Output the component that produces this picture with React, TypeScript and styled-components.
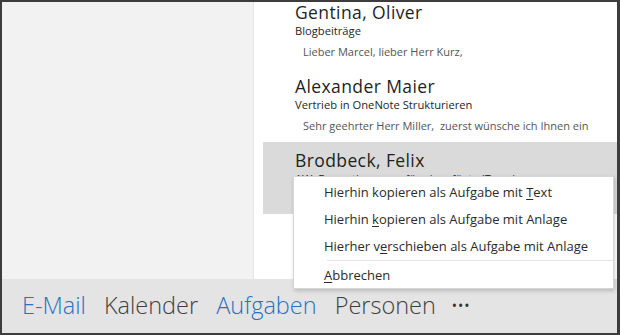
import React from "react";
import styled, { createGlobalStyle } from "styled-components";

const GlobalStyle = createGlobalStyle`
  html, body {
    margin: 0;
    padding: 0;
    background: #ffffff;
  }
  body {
    font-family: "Open Sans", "Noto Sans", sans-serif;
  }
`;

const Frame = styled.div`
  position: relative;
  box-sizing: border-box;
  width: 620px;
  height: 335px;
  border: 2px solid #3d3d3d;
  border-right-width: 3px;
  display: flex;
  flex-direction: column;
  overflow: hidden;
`;

const Main = styled.div`
  display: flex;
  height: 277px;
`;

const FolderPane = styled.div`
  width: 251px;
  background: #f2f2f2;
  border-right: 1px solid #e6e6e6;
`;

const MessageList = styled.div`
  flex: 1;
  background: #ffffff;
  overflow: hidden;
`;

const ListScroll = styled.div`
  margin-top: -8px;
  display: flex;
  flex-direction: column;
  gap: 2px;
`;

const Row = styled.div<{ $selected?: boolean }>`
  box-sizing: border-box;
  height: 72px;
  margin-left: 9px;
  padding: 8px 0 0 32px;
  background: ${(p) => (p.$selected ? "#dadada" : "transparent")};
  white-space: nowrap;
`;

const Sender = styled.div`
  font-size: 17.5px;
  line-height: 21px;
  letter-spacing: 0.4px;
  color: #1f1f1f;
`;

const Subject = styled.div`
  font-size: 11.2px;
  line-height: 16px;
  color: #262626;
`;

const Preview = styled.div`
  margin-top: 5px;
  padding-left: 8px;
  font-size: 11px;
  line-height: 16px;
  color: #555555;
`;

const NavBar = styled.div`
  flex: 1;
  display: flex;
  align-items: center;
  gap: 18px;
  padding: 0 0 2px 20px;
  background: #e4e4e4;
`;

const NavItem = styled.span<{ $active?: boolean }>`
  font-size: 23.5px;
  font-weight: 300;
  color: ${(p) => (p.$active ? "#2672c4" : "#3f3f3f")};
`;

const More = styled.span`
  font-size: 14px;
  letter-spacing: 1px;
  color: #333333;
  margin-left: -2px;
`;

const ContextMenu = styled.div`
  position: absolute;
  left: 291px;
  top: 174px;
  width: 321px;
  box-sizing: border-box;
  padding: 2px 0 0;
  height: 113px;
  background: #ffffff;
  border: 1px solid #d6d6d6;
  box-shadow: 1px 2px 4px rgba(0, 0, 0, 0.18);
`;

const MenuItem = styled.div`
  height: 27px;
  line-height: 27px;
  padding-left: 30px;
  font-size: 13px;
  color: #2b2b2b;
  white-space: nowrap;
`;

const Separator = styled.div`
  height: 1px;
  margin: 0 0 1px 33px;
  background: #e3e3e3;
`;

const Key = styled.span`
  text-decoration: underline;
  text-underline-offset: 2px;
`;

const messages = [
  {
    sender: "Gentina, Oliver",
    subject: "Blogbeiträge",
    preview: "Lieber Marcel, lieber Herr Kurz,",
  },
  {
    sender: "Alexander Maier",
    subject: "Vertrieb in OneNote Strukturieren",
    preview: "Sehr geehrter Herr Miller,\u00a0 zuerst wünsche ich Ihnen ein",
  },
  {
    sender: "Brodbeck, Felix",
    subject: "AW: Formatierungen für eingefügte ITermine",
    preview: "",
    selected: true,
  },
];

const App = () => {
  return (
    <>
      <GlobalStyle />
      <Frame>
        <Main>
          <FolderPane />
          <MessageList>
            <ListScroll>
              {messages.map((m) => (
                <Row key={m.sender} $selected={m.selected}>
                  <Sender>{m.sender}</Sender>
                  <Subject>{m.subject}</Subject>
                  {m.preview && <Preview>{m.preview}</Preview>}
                </Row>
              ))}
            </ListScroll>
          </MessageList>
        </Main>
        <NavBar>
          <NavItem $active>E-Mail</NavItem>
          <NavItem>Kalender</NavItem>
          <NavItem $active>Aufgaben</NavItem>
          <NavItem>Personen</NavItem>
          <More>•••</More>
        </NavBar>
        <ContextMenu>
          <MenuItem>
            Hierhin kopieren als Aufgabe mit <Key>T</Key>ext
          </MenuItem>
          <MenuItem>
            Hierhin <Key>k</Key>opieren als Aufgabe mit Anlage
          </MenuItem>
          <MenuItem>
            Hierher v<Key>e</Key>rschieben als Aufgabe mit Anlage
          </MenuItem>
          <Separator />
          <MenuItem>
            <Key>A</Key>bbrechen
          </MenuItem>
        </ContextMenu>
      </Frame>
    </>
  );
};

export default App;
